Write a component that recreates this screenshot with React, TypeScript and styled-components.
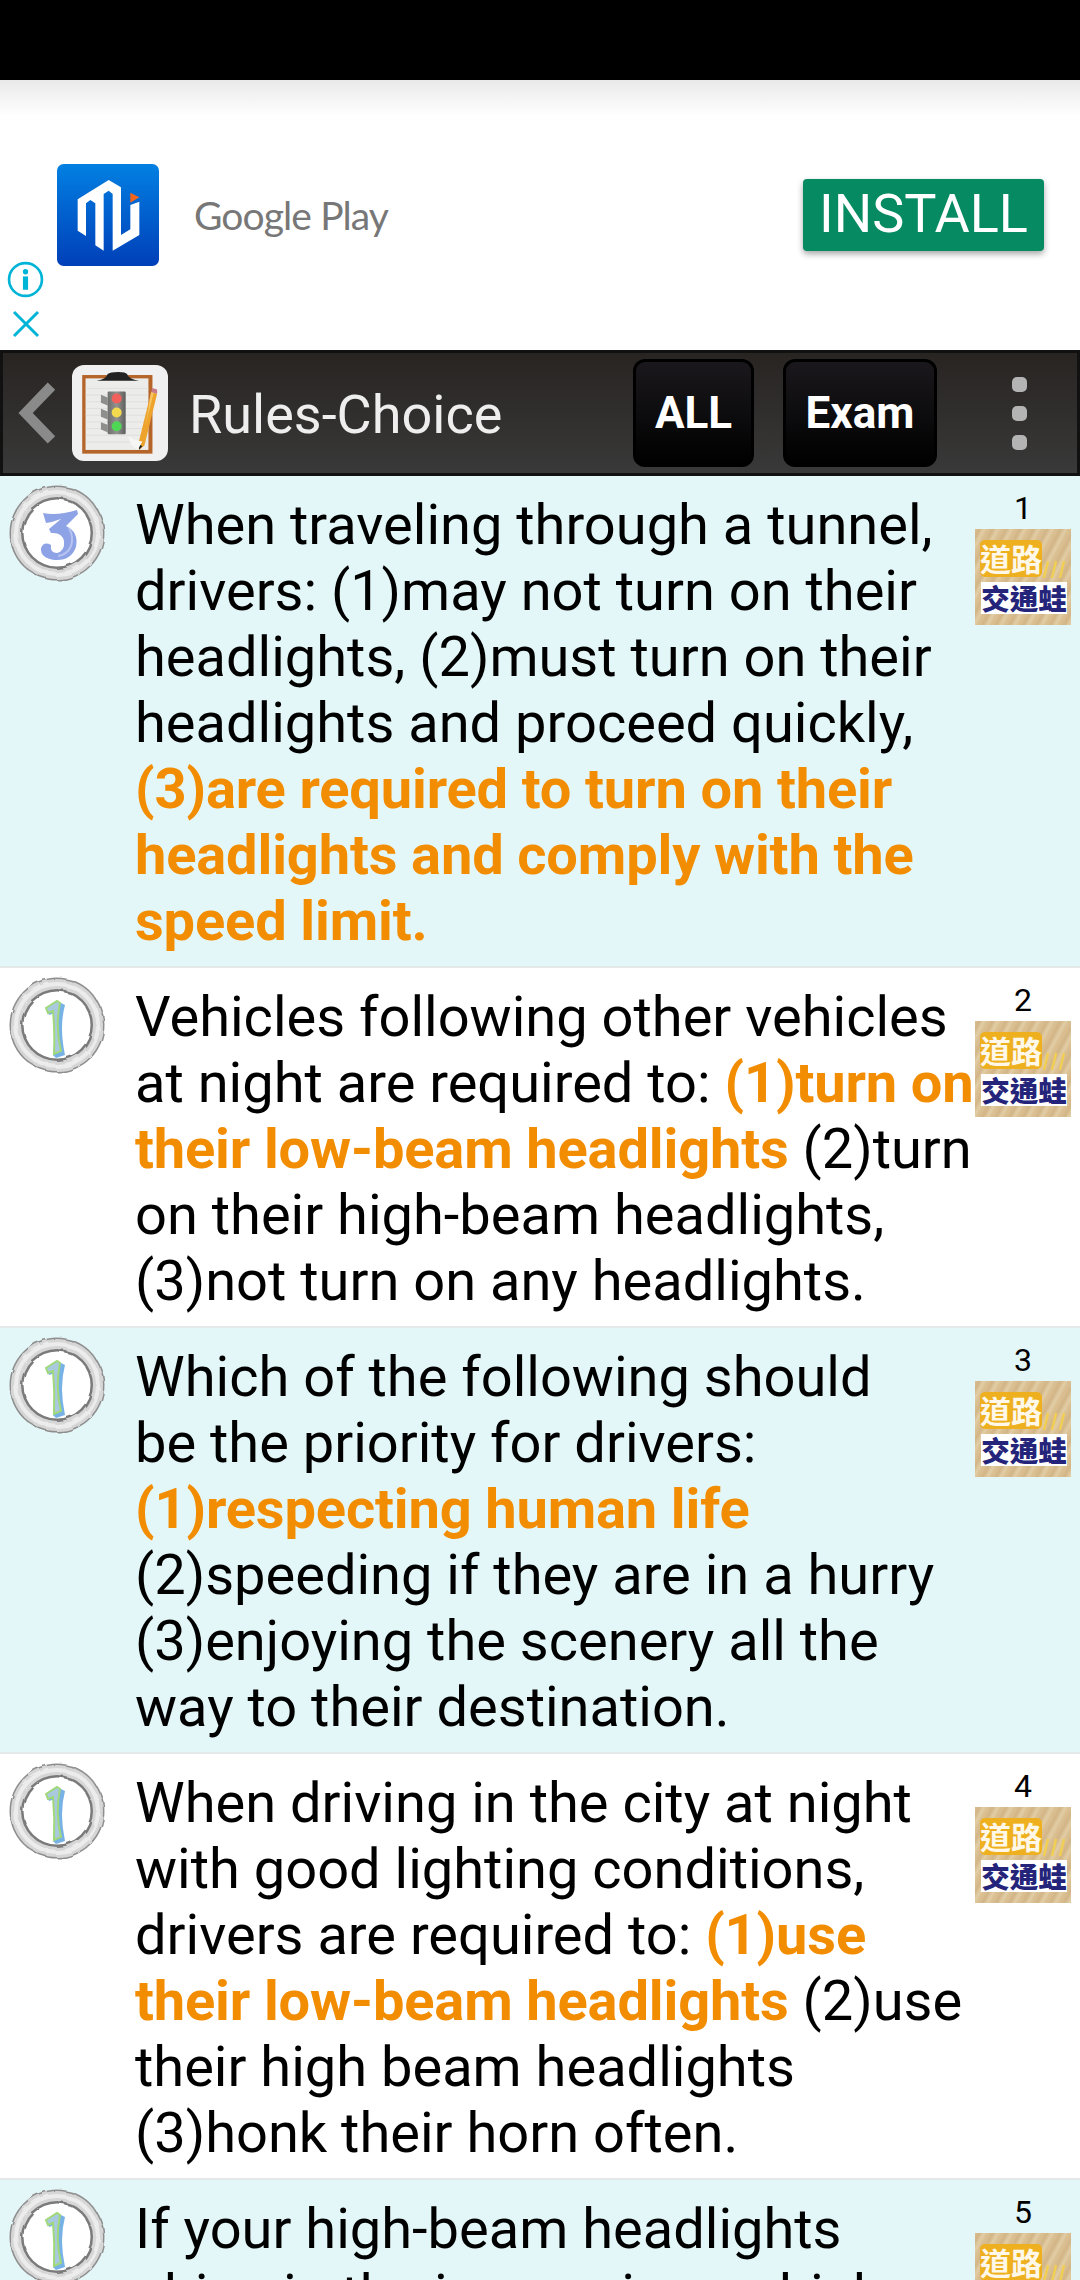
import React from "react";
import styled, { createGlobalStyle } from "styled-components";

const GlobalStyle = createGlobalStyle`
  html, body {
    margin: 0;
    padding: 0;
    background: #fff;
  }
`;

type Answer = 1 | 3;

interface IRule {
  id: number;
  answer: Answer;
  height: number;
  body: React.ReactNode;
}

const rules: IRule[] = [
  {
    id: 1,
    answer: 3,
    height: 490,
    body: (
      <>
        When traveling through a tunnel,
        <br />
        drivers: (1)may not turn on their
        <br />
        headlights, (2)must turn on their
        <br />
        headlights and proceed quickly,
        <br />
        <Hit>
          (3)are required to turn on their
          <br />
          headlights and comply with the
          <br />
          speed limit.
        </Hit>
      </>
    ),
  },
  {
    id: 2,
    answer: 1,
    height: 358,
    body: (
      <>
        Vehicles following other vehicles
        <br />
        at night are required to: <Hit>(1)turn on</Hit>
        <br />
        <Hit>their low-beam headlights</Hit> (2)turn
        <br />
        on their high-beam headlights,
        <br />
        (3)not turn on any headlights.
      </>
    ),
  },
  {
    id: 3,
    answer: 1,
    height: 424,
    body: (
      <>
        Which of the following should
        <br />
        be the priority for drivers:
        <br />
        <Hit>(1)respecting human life</Hit>
        <br />
        (2)speeding if they are in a hurry
        <br />
        (3)enjoying the scenery all the
        <br />
        way to their destination.
      </>
    ),
  },
  {
    id: 4,
    answer: 1,
    height: 424,
    body: (
      <>
        When driving in the city at night
        <br />
        with good lighting conditions,
        <br />
        drivers are required to: <Hit>(1)use</Hit>
        <br />
        <Hit>their low-beam headlights</Hit> (2)use
        <br />
        their high beam headlights
        <br />
        (3)honk their horn often.
      </>
    ),
  },
  {
    id: 5,
    answer: 1,
    height: 100,
    body: (
      <>
        If your high-beam headlights
        <br />
        shine in the inner mirror which
      </>
    ),
  },
];

const AppIcon = () => (
  <svg width="102" height="102" viewBox="20 12 306 306">
    <defs>
      <linearGradient id="appBlue" x1="0" y1="0" x2="0" y2="1">
        <stop offset="0" stopColor="#0280e2" />
        <stop offset="1" stopColor="#003fb8" />
      </linearGradient>
    </defs>
    <rect x="20" y="12" width="306" height="306" rx="20" fill="url(#appBlue)" />
    <path
      d="M82 118 L175 60 L212 82 L212 225 L240 208 L240 135 L267 125 L267 225 L187 272 L187 102 L175 92 L160 102 L160 272 L135 256 L135 130 L120 120 L107 130 L107 228 L82 212 Z"
      fill="#fff"
    />
    <path d="M240 98 L267 112 L240 128 Z" fill="#f4641c" />
  </svg>
);

const BoardIcon = () => (
  <svg width="96" height="96" viewBox="22 15 286 287">
    <defs>
      <linearGradient id="lightBody" x1="0" y1="0" x2="1" y2="0">
        <stop offset="0" stopColor="#6e6e6c" />
        <stop offset="0.5" stopColor="#929290" />
        <stop offset="1" stopColor="#5e5e5c" />
      </linearGradient>
    </defs>
    <rect x="52" y="45" width="210" height="235" fill="#b5652a" />
    <rect x="62" y="55" width="188" height="214" fill="#ececea" />
    <path
      d="M62 85H250M62 105H250M62 125H250M62 145H250M62 165H250M62 185H250M62 205H250M62 225H250M62 245H250"
      stroke="#d8d8d6"
      strokeWidth="2"
    />
    <path d="M95 62 Q125 58 128 42 Q135 36 160 36 Q182 36 186 42 Q190 58 222 62 Z" fill="#222" />
    <path
      d="M108 104 L128 112 V136 L108 128 Z M108 146 L128 154 V178 L108 170 Z M108 186 L128 194 V216 L108 208 Z"
      fill="#8e8e8c"
    />
    <rect x="128" y="94" width="54" height="128" rx="4" fill="url(#lightBody)" />
    <circle cx="155" cy="115" r="15" fill="#f2605c" />
    <circle cx="155" cy="157" r="15" fill="#f3d94e" />
    <circle cx="155" cy="198" r="15" fill="#4fd654" />
    <path d="M220 250 L258 96 L276 101 L238 256 L222 268 Z" fill="#eda32c" />
    <path d="M248 160 L258 96 L266 98 L240 200 Z" fill="#f7c563" />
    <path d="M258 96 L262 84 L276 88 L276 101 Z" fill="#c97a88" />
    <path d="M222 268 L220 250 L232 258 Z" fill="#222" />
    <path d="M190 228 Q205 240 232 244 L218 268 Q195 258 190 228 Z" fill="#f6f6f4" />
  </svg>
);

const Badge = ({ answer }: { answer: Answer }) => (
  <svg width="98" height="98" viewBox="-1 -1 98 98">
    <defs>
      <filter id="roughEdge" x="-10%" y="-10%" width="120%" height="120%">
        <feTurbulence type="fractalNoise" baseFrequency="0.07" numOctaves="2" seed="4" />
        <feDisplacementMap in="SourceGraphic" scale="4" />
        <feGaussianBlur stdDeviation="0.7" />
      </filter>
    </defs>
    <g filter="url(#roughEdge)">
      <circle cx="48" cy="48" r="47.5" fill="#8e8e8e" />
      <circle cx="48" cy="48" r="46" fill="#d6d6d6" />
      <circle cx="48" cy="48" r="41" fill="none" stroke="#ececec" strokeWidth="4" />
      <circle cx="48" cy="48" r="36" fill="#7a7a7a" />
      <circle cx="48" cy="48" r="33.5" fill="#fff" />
    </g>
    {answer === 3 ? (
      <>
        <path
          d="M34 28 Q48 31 68 25 L69 29 L57 41 Q70 47 67 62 Q62 76 46 75 Q31 73 32 63 Q35 56 42 60 Q41 68 48 68 Q56 66 55 56 Q53 47 42 48 L40 44 L52 34 Q44 37 37 38 Z"
          fill="#8ea3e6"
        />
        <path d="M60 43 Q65 52 62 61 Q58 70 49 71" fill="none" stroke="#b6c3f0" strokeWidth="2" />
      </>
    ) : (
      <>
        <path d="M38 33 L50 25 L56 28 Q50 50 56 78 L47 81 L44 78 Q47 55 46 36 L40 38 Z" fill="#76b2e6" />
        <path
          d="M37 31 L48 24 L51 26 Q46 50 52 74 L45 77 Q46 55 44 34 L39 36 Z"
          fill="#a9c9de"
          stroke="#a0d87a"
          strokeWidth="2"
        />
      </>
    )}
  </svg>
);

const RoadLogo = () => (
  <LogoBox>
    <LogoRoad>道路</LogoRoad>
    <LogoStripes viewBox="0 0 24 18">
      <path d="M3 18 L7 1 M11 18 L15 1 M19 18 L23 1" stroke="#f1cf52" strokeWidth="2.4" fill="none" />
    </LogoStripes>
    <LogoTraffic>交通蛙</LogoTraffic>
  </LogoBox>
);

export default function App() {
  return (
    <Screen>
      <GlobalStyle />
      <StatusBar />
      <AdBanner>
        <AdFade />
        <AdMain>
          <AppIcon />
          <PlayLabel>Google Play</PlayLabel>
        </AdMain>
        <InstallButton>INSTALL</InstallButton>
        <AdChoices>
          <svg width="37" height="37" viewBox="0 0 36 36">
            <circle cx="18" cy="18" r="16" fill="none" stroke="#00b4d8" strokeWidth="2.6" />
            <circle cx="18" cy="10.5" r="2.6" fill="#00b4d8" />
            <rect x="15.5" y="15" width="5" height="13" fill="#00b4d8" />
          </svg>
          <svg width="28" height="30" viewBox="0 0 28 30">
            <path d="M2 3 L26 27 M26 3 L2 27" stroke="#00b4d8" strokeWidth="3" />
          </svg>
        </AdChoices>
      </AdBanner>
      <Toolbar>
        <BackArrow viewBox="0 0 36 60">
          <path d="M32 4 L7 30 L32 56" fill="none" stroke="#8a8a8a" strokeWidth="10" />
        </BackArrow>
        <IconTile>
          <BoardIcon />
        </IconTile>
        <ToolbarTitle>Rules-Choice</ToolbarTitle>
        <ToolButton $width={121}>ALL</ToolButton>
        <ToolButton $width={154}>Exam</ToolButton>
        <MenuDots>
          <span />
          <span />
          <span />
        </MenuDots>
      </Toolbar>
      <RuleList>
        {rules.map((rule, index) => (
          <RuleRow key={rule.id} $height={rule.height} $tinted={index % 2 === 0}>
            <BadgeCell>
              <Badge answer={rule.answer} />
            </BadgeCell>
            <RuleText>{rule.body}</RuleText>
            <RuleSide>
              <RuleNumber>{rule.id}</RuleNumber>
              <RoadLogo />
            </RuleSide>
          </RuleRow>
        ))}
      </RuleList>
    </Screen>
  );
}

function Hit({ children }: { children: React.ReactNode }) {
  return <HitText>{children}</HitText>;
}

const Screen = styled.div`
  width: 1080px;
  height: 2280px;
  overflow: hidden;
  background: #fff;
  font-family: Roboto, "Liberation Sans", sans-serif;
`;

const StatusBar = styled.div`
  height: 80px;
  background: #000;
`;

const AdBanner = styled.div`
  position: relative;
  height: 270px;
  display: flex;
  align-items: flex-start;
  justify-content: space-between;
  padding: 84px 36px 0 57px;
  box-sizing: border-box;
  background: #fff;
`;

const AdFade = styled.div`
  position: absolute;
  left: 0;
  right: 0;
  top: 0;
  height: 36px;
  background: linear-gradient(#e9e9e9, #fff);
`;

const AdMain = styled.div`
  display: flex;
  align-items: center;
  gap: 35px;
`;

const PlayLabel = styled.span`
  font-family: Lato, sans-serif;
  font-size: 39px;
  letter-spacing: -0.9px;
  color: #777;
`;

const InstallButton = styled.div`
  margin-top: 15px;
  width: 241px;
  height: 72px;
  border-radius: 4px;
  background: #068a61;
  box-shadow: 0 3px 6px rgba(0, 0, 0, 0.35);
  color: #fff;
  font-size: 54px;
  line-height: 70px;
  text-align: center;
`;

const AdChoices = styled.div`
  position: absolute;
  left: 7px;
  top: 181px;
  display: flex;
  flex-direction: column;
  align-items: center;
  gap: 11px;
`;

const Toolbar = styled.div`
  height: 126px;
  box-sizing: border-box;
  border: 3px solid #111;
  display: flex;
  align-items: center;
  background: linear-gradient(#282422, #393939);
`;

const BackArrow = styled.svg`
  width: 38px;
  height: 62px;
  margin-left: 15px;
`;

const IconTile = styled.div`
  width: 96px;
  height: 96px;
  margin-left: 16px;
  border-radius: 12px;
  background: #f0f0f0;
  display: flex;
`;

const ToolbarTitle = styled.div`
  flex: 1;
  margin-left: 21px;
  padding-top: 2px;
  font-size: 54px;
  color: #eee;
`;

const ToolButton = styled.div<{ $width: number }>`
  width: ${({ $width }) => $width}px;
  height: 108px;
  box-sizing: border-box;
  margin-right: 29px;
  border: 3px solid #000;
  border-radius: 12px;
  background: linear-gradient(#1a181c, #000);
  color: #fff;
  font-size: 44px;
  font-weight: 700;
  line-height: 102px;
  text-align: center;
`;

const MenuDots = styled.div`
  width: 60px;
  margin-left: 23px;
  margin-right: 28px;
  display: flex;
  flex-direction: column;
  align-items: center;
  gap: 14px;
  span {
    width: 15px;
    height: 15px;
    border-radius: 5px;
    background: #b4b4b4;
  }
`;

const RuleList = styled.div`
  display: flex;
  flex-direction: column;
`;

const RuleRow = styled.div<{ $height: number; $tinted: boolean }>`
  height: ${({ $height }) => $height}px;
  flex: none;
  display: flex;
  align-items: flex-start;
  background: ${({ $tinted }) => ($tinted ? "#e4f7f8" : "#fff")};
  border-bottom: 2px solid #e4e8e8;
`;

const BadgeCell = styled.div`
  width: 135px;
  flex: none;
  padding: 8px 0 0 8px;
  box-sizing: border-box;
`;

const RuleText = styled.div`
  width: 840px;
  flex: none;
  padding-top: 16px;
  font-size: 56px;
  line-height: 66px;
  color: #000;
  white-space: nowrap;
`;

const HitText = styled.span`
  color: #f28c00;
  font-weight: 700;
  letter-spacing: -0.15px;
`;

const RuleSide = styled.div`
  width: 96px;
  flex: none;
  padding-top: 12px;
  display: flex;
  flex-direction: column;
  align-items: center;
`;

const RuleNumber = styled.div`
  font-size: 32px;
  line-height: 40px;
  color: #000;
`;

const LogoBox = styled.div`
  position: relative;
  width: 96px;
  height: 96px;
  flex: none;
  margin-top: 1px;
  padding: 11px 0 0 5px;
  box-sizing: border-box;
  background: repeating-linear-gradient(118deg, #dbc094 0, #d2b586 4px, #e2cda6 8px, #d8bc8c 12px);
  font-family: "Noto Sans CJK TC", sans-serif;
  font-weight: 700;
  line-height: 1;
`;

const LogoRoad = styled.div`
  width: 62px;
  height: 37px;
  border-radius: 5px;
  background: #eeb01f;
  color: #fff8e8;
  font-size: 31px;
  line-height: 36px;
  text-align: center;
  white-space: nowrap;
`;

const LogoStripes = styled.svg`
  position: absolute;
  right: 6px;
  top: 31px;
  width: 24px;
  height: 18px;
`;

const LogoTraffic = styled.div`
  width: 86px;
  margin-top: 5px;
  margin-left: 1px;
  background: #fff;
  color: #24247a;
  font-size: 28.5px;
  font-weight: 900;
  line-height: 32px;
  text-align: center;
  white-space: nowrap;
`;
